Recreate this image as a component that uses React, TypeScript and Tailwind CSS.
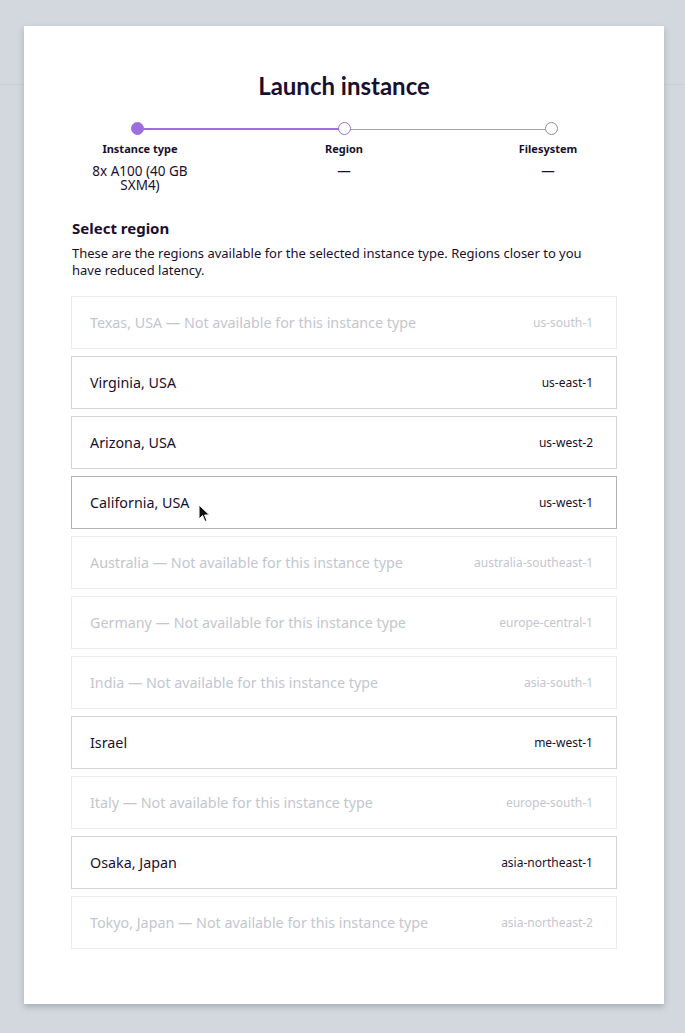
import React from 'react';

type Region = {
  name: string;
  code: string;
  available: boolean;
  hovered?: boolean;
};

const regions: Region[] = [
  { name: 'Texas, USA', code: 'us-south-1', available: false },
  { name: 'Virginia, USA', code: 'us-east-1', available: true },
  { name: 'Arizona, USA', code: 'us-west-2', available: true },
  { name: 'California, USA', code: 'us-west-1', available: true, hovered: true },
  { name: 'Australia', code: 'australia-southeast-1', available: false },
  { name: 'Germany', code: 'europe-central-1', available: false },
  { name: 'India', code: 'asia-south-1', available: false },
  { name: 'Israel', code: 'me-west-1', available: true },
  { name: 'Italy', code: 'europe-south-1', available: false },
  { name: 'Osaka, Japan', code: 'asia-northeast-1', available: true },
  { name: 'Tokyo, Japan', code: 'asia-northeast-2', available: false },
];

const steps = [
  { label: 'Instance type', value: '8x A100 (40 GB SXM4)' },
  { label: 'Region', value: '—' },
  { label: 'Filesystem', value: '—' },
];

const Cursor = () => (
  <svg width="14" height="20" viewBox="0 0 14 20" className="absolute left-[108px] top-[12px]">
    <path d="M1 1 L1 15 L4.5 11.5 L7 17.5 L9 16.6 L6.6 11 L11.5 11 Z" fill="#111" stroke="#fff" strokeWidth="1" />
  </svg>
);

const RegionRow: React.FC<{ region: Region }> = ({ region }) => {
  if (!region.available) {
    return (
      <div className="flex h-[53px] items-center justify-between border border-[#ebebef] bg-white pl-[18px] pr-[23px]">
        <span className="text-[14.3px] text-[#c3c6cf]">{region.name} — Not available for this instance type</span>
        <span className="text-[12px] text-[#c3c6cf]">{region.code}</span>
      </div>
    );
  }
  return (
    <div
      className={`flex h-[53px] items-center justify-between border bg-white pl-[18px] pr-[23px] ${
        region.hovered ? 'border-[#b4b4b8]' : 'border-[#d4d4d8]'
      }`}
    >
      <span className="relative text-[14.3px] text-[#190f30]">
        {region.name}
        {region.hovered && <Cursor />}
      </span>
      <span className="text-[12px] text-[#190f30]">{region.code}</span>
    </div>
  );
};

export default function App() {
  return (
    <div className="relative min-h-[1033px] bg-[#d3d8df] font-['Noto_Sans',sans-serif]">
      <div className="absolute inset-x-0 top-[84px] h-px bg-[#c9ced6]" />
      <div className="relative pl-6 pt-[26px]">
        <div className="w-[640px] bg-white px-12 pb-[55px] pt-[44px] shadow-[0_3px_6px_rgba(40,50,70,0.25)]">
          <h1 className="text-center font-['Lato',sans-serif] text-[24px] font-bold leading-8 text-[#190f30]">
            Launch instance
          </h1>

          <div className="relative mt-[20px]">
            <div className="absolute left-[64px] right-[65px] top-[6px] flex">
              <div className="h-[2px] flex-1 bg-[#9e6de0]" />
              <div className="mt-[0.5px] h-[1px] flex-1 bg-[#a3a3a8]" />
            </div>
            <div className="relative flex justify-between">
              {steps.map((s, i) => (
                <div key={s.label} className="flex w-[136px] flex-col items-center">
                  <div
                    className={`h-[13px] w-[13px] rounded-full border ${
                      i === 0
                        ? '-translate-x-[3px] border-[#9e6de0] bg-[#9e6de0]'
                        : i === 1
                          ? 'border-[#9e6de0] bg-white'
                          : 'translate-x-[3px] border-[#8e8e94] bg-white'
                    }`}
                  />
                  <div className="mt-[6px] text-[11px] font-bold leading-4 text-[#190f30]">{s.label}</div>
                  <div className="mt-[7px] w-[110px] text-center text-[13.5px] leading-[14px] text-[#190f30]">
                    {s.value}
                  </div>
                </div>
              ))}
            </div>
          </div>

          <h2 className="mt-[26px] text-[15px] font-bold leading-5 text-[#190f30]">Select region</h2>
          <p className="mt-[7px] max-w-[530px] text-[13px] leading-[17px] text-[#190f30]">
            These are the regions available for the selected instance type. Regions closer to you have reduced
            latency.
          </p>

          <div className="-mx-px mt-[17px] flex flex-col gap-[7px]">
            {regions.map((r) => (
              <RegionRow key={r.code} region={r} />
            ))}
          </div>
        </div>
      </div>
    </div>
  );
}
